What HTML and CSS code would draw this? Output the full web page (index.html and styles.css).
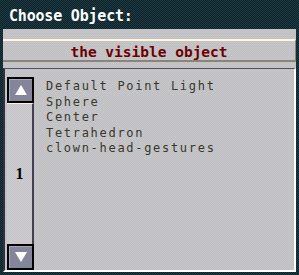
FILE: index.html
```html
<!DOCTYPE html>
<html lang="en">
<head>
  <meta charset="UTF-8">
  <title>Choose Object</title>
  <link rel="stylesheet" href="styles.css">
</head>
<body>
  <div class="window">
    <div class="title">Choose Object:</div>
    <div class="panel">
      <button type="button" class="current">the visible object</button>
      <div class="list">
        <div class="scrollbar">
          <div class="arrow">
            <svg width="14" height="12" viewBox="0 0 14 12"><polygon points="7,1 13,11 1,11" fill="#fff"/></svg>
          </div>
          <div class="track"><span class="page">1</span></div>
          <div class="arrow">
            <svg width="14" height="12" viewBox="0 0 14 12"><polygon points="1,1 13,1 7,11" fill="#fff"/></svg>
          </div>
        </div>
        <ul class="items">
          <li>Default Point Light</li>
          <li>Sphere</li>
          <li>Center</li>
          <li>Tetrahedron</li>
          <li>clown-head-gestures</li>
        </ul>
      </div>
    </div>
  </div>
</body>
</html>
```

FILE: styles.css
```css
body {
  margin: 0;
  background-color: #16303a;
}
.window {
  width: 299px;
  height: 275px;
  background: repeating-conic-gradient(#0c2230 0 25%, #1e3a3a 0 50%) 0 0 / 2px 2px;
}
.title {
  height: 29px;
  box-sizing: border-box;
  padding: 8px 0 0 9px;
  font-family: "DejaVu Sans Mono", monospace;
  font-weight: bold;
  font-size: 15px;
  letter-spacing: -0.2px;
  line-height: 17px;
  color: #fff;
}
.panel {
  margin: 0 3px;
  height: 243px;
  padding-top: 10px;
  box-sizing: border-box;
  display: flex;
  flex-direction: column;
  gap: 6px;
  background: repeating-conic-gradient(#bcbcd2 0 25%, #cac8b8 0 50%) 0 0 / 2px 2px;
}
.current {
  height: 23px;
  width: 100%;
  margin: 0;
  padding: 2px 0 0;
  border: none;
  border-top: 2px solid #fff6e0;
  border-bottom: 2px solid #8a8676;
  border-right: 1px solid #8a8676;
  background: transparent;
  font-family: "DejaVu Sans Mono", monospace;
  font-weight: bold;
  font-size: 14.5px;
  color: #6a0000;
  text-align: center;
}
.list {
  flex: 1;
  display: flex;
  border-top: 1px solid #505060;
  border-left: 2px solid #303040;
  border-right: 2px solid #fff;
  border-bottom: 2px solid #fff;
}
.scrollbar {
  width: 27px;
  margin-left: 2px;
  padding-top: 8px;
  display: flex;
  flex-direction: column;
}
.arrow {
  height: 26px;
  box-sizing: border-box;
  border: 2px solid #000;
  background-color: #84849a;
  box-shadow: inset 1px 1px 0 #a8a8bc;
  display: flex;
  align-items: center;
  justify-content: center;
}
.track {
  flex: 1;
  display: flex;
  align-items: center;
  justify-content: center;
  border-top: 1px solid #fff4dc;
  border-right: 2px solid #404050;
  background: repeating-conic-gradient(#c4c4d8 0 25%, #d0ccc0 0 50%) 0 0 / 2px 2px;
}
.page {
  font-family: "Liberation Serif", serif;
  font-weight: bold;
  font-size: 16px;
  color: #000;
}
.items {
  list-style: none;
  margin: 0;
  padding: 10px 0 0 12px;
  font-family: "DejaVu Sans Mono", monospace;
  font-size: 12px;
  letter-spacing: 1.7px;
  line-height: 15.5px;
  color: #38382e;
}
```
